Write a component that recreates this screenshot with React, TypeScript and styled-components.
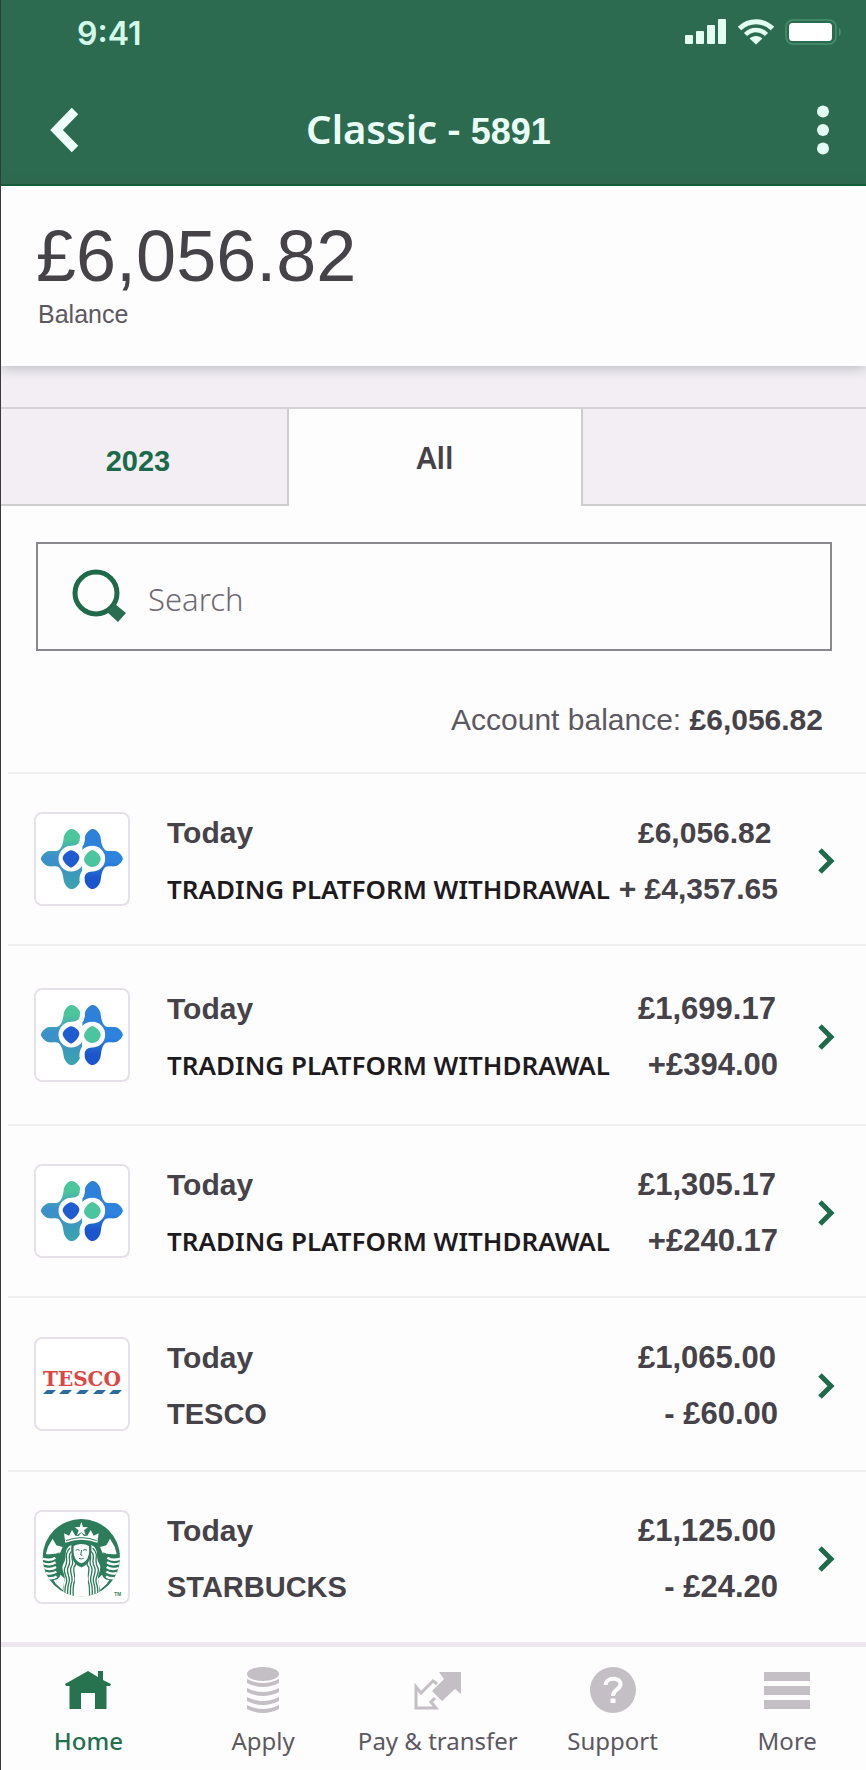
import React from "react";
import styled, { createGlobalStyle } from "styled-components";

const GlobalStyle = createGlobalStyle`
  *, *::before, *::after { box-sizing: border-box; }
  body { margin: 0; background: #fefdfe; }
  h1, p, ul { margin: 0; padding: 0; }
  ul { list-style: none; }
  button { font: inherit; border: 0; padding: 0; background: none; cursor: pointer; }
`;

const sans = `"Liberation Sans", Arial, sans-serif`;
const humanist = `"Noto Sans", "Open Sans", sans-serif`;

const Page = styled.div`
  min-height: 100vh;
  display: flex;
  flex-direction: column;
  border-left: 1px solid #3a383b;
  background: #fefdfe;
  color: #454248;
  font-family: ${sans};
  overflow-x: hidden;
`;

const Header = styled.header`
  background: #2d6b50;
  border-bottom: 2px solid #13603c;
  color: #eafff6;
`;

const StatusBar = styled.div`
  display: flex;
  align-items: center;
  justify-content: space-between;
  height: 68px;
  padding: 0 24px 0 76px;
`;

const Clock = styled.span`
  font: 600 32px/36px Inter, sans-serif;
  color: #d3fbea;
`;

const StatusIcons = styled.div`
  display: flex;
  align-items: center;
  gap: 10px;
  padding-bottom: 4px;
`;

const TitleBar = styled.div`
  display: grid;
  grid-template-columns: 1fr auto 1fr;
  align-items: center;
  height: 116px;
  padding: 8px 30px 0 20px;
`;

const IconButton = styled.button<{ $end?: boolean }>`
  display: flex;
  justify-content: center;
  width: ${(p) => (p.$end ? 26 : 86)}px;
  justify-self: ${(p) => (p.$end ? "end" : "start")};
  padding: 4px 0;
`;

const Title = styled.h1`
  font: 600 40px/52px ${humanist};
  white-space: nowrap;
`;

const AccountNumber = styled.span`
  font: 700 36px/52px ${sans};
`;

const Summary = styled.section`
  position: relative;
  height: 180px;
  padding: 30px 35px 0;
  background: #fefdfe;
  box-shadow: 0 2px 12px rgba(60, 64, 66, 0.3);
`;

const BigBalance = styled.p`
  font-size: 72px;
  line-height: 80px;
`;

const BalanceLabel = styled.p`
  padding: 4px 2px;
  font-size: 25px;
  line-height: 28px;
  color: #5c5860;
`;

const TabBand = styled.div`
  padding-top: 41px;
  background: #f2eef4;
`;

const Tabs = styled.div`
  display: grid;
  grid-template-columns: 288fr 292fr 285fr;
  height: 99px;
  border-top: 2px solid #d5d1d6;
`;

const Tab = styled.button<{ $active?: boolean; $side?: "left" | "right" }>`
  border-style: solid;
  border-color: #d0cdd1;
  border-width: 0;
  border-bottom-width: ${(p) => (p.$active ? 0 : 2)}px;
  border-right-width: ${(p) => (p.$side === "left" ? 2 : 0)}px;
  border-left-width: ${(p) => (p.$side === "right" ? 2 : 0)}px;
  padding: ${(p) => (p.$active ? 0 : "8px 12px 0 0")};
  background: ${(p) => (p.$active ? "#fefdfe" : "#f2eef4")};
  color: ${(p) => (p.$active ? "#454248" : "#1a6a4a")};
  font: ${(p) => (p.$active ? `600 30px/36px ${humanist}` : `700 29px/36px ${sans}`)};
`;

const SearchBox = styled.label`
  display: flex;
  align-items: center;
  gap: 20px;
  height: 109px;
  margin: 36px 34px 0 35px;
  padding: 0 34px;
  border: 2px solid #8b888d;
`;

const SearchInput = styled.input`
  flex: 1;
  min-width: 0;
  border: 0;
  padding: 4px 0 0;
  outline: 0;
  background: transparent;
  font: 300 31px/40px ${humanist};
  color: #454248;
  &::placeholder { color: #6d6971; opacity: 1; }
`;

const AccountBalance = styled.p`
  padding: 51px 43px 34px;
  font-size: 30px;
  line-height: 36px;
  text-align: right;
  color: #5c5860;
  strong { color: #454248; }
`;

const TransactionList = styled.ul`
  margin-left: 7px;
`;

const Row = styled.a<{ $height: number }>`
  display: grid;
  grid-template-columns: 96px 1fr 140px 57px;
  align-items: center;
  min-height: ${(p) => p.$height}px;
  padding: 3px 31px 0 26px;
  border-top: 2px solid #f1eef1;
  color: inherit;
  text-decoration: none;
`;

const Tile = styled.span`
  display: block;
  width: 96px;
  height: 94px;
  margin-bottom: 4px;
  border: 2px solid #e6e1e8;
  border-radius: 8px;
  background: #fff;
  svg { display: block; }
`;

const Details = styled.span`
  display: grid;
  gap: 20px;
  padding-left: 37px;
  white-space: nowrap;
`;

const Day = styled.span`
  font: 700 30px/36px ${sans};
`;

const Payee = styled.span<{ $strong?: boolean }>`
  font: ${(p) => (p.$strong ? `600 26px/36px ${humanist}` : `700 29px/36px ${sans}`)};
  color: ${(p) => (p.$strong ? "#1d1a20" : "inherit")};
`;

const Amounts = styled.span<{ $compact?: boolean }>`
  display: flex;
  flex-direction: column;
  align-items: flex-end;
  gap: 20px;
  font-weight: 700;
  font-size: ${(p) => (p.$compact ? 30 : 31)}px;
  line-height: 36px;
  white-space: nowrap;
`;

const RunningBalance = styled.span`
  width: 100%;
`;

const ChevronCell = styled.span`
  display: flex;
  justify-content: flex-end;
`;

const BottomNav = styled.nav`
  display: grid;
  grid-template-columns: repeat(5, 20.2%);
  height: 130px;
  overflow: hidden;
  border-top: 5px solid #ede8ee;
`;

const NavItem = styled.a<{ $active?: boolean }>`
  display: flex;
  flex-direction: column;
  align-items: center;
  gap: 12px;
  padding-top: 20px;
  color: ${(p) => (p.$active ? "#23704e" : "#5c5860")};
  font: ${(p) => (p.$active ? 500 : 400)} 24px/32px ${humanist};
  text-decoration: none;
  white-space: nowrap;
  svg { fill: ${(p) => (p.$active ? "#27724f" : "#c3bfc5")}; }
`;

const Signal = () => (
  <svg width="42" height="26" viewBox="0 0 42 26" fill="#e4fff4" aria-hidden="true">
    <rect x="0" y="16" width="8" height="9" rx="1" />
    <rect x="11" y="12" width="8" height="13" rx="1" />
    <rect x="22" y="6" width="8" height="19" rx="1" />
    <rect x="33" y="0" width="8" height="25" rx="1" />
  </svg>
);

const Wifi = () => (
  <svg width="38" height="26" viewBox="0 0 38 26" fill="none" stroke="#e4fff4" aria-hidden="true">
    <path d="M2.5 9.5C12 0.5 26 0.5 35.500 9.500" strokeWidth="5" />
    <path d="M8.500 15.500C14.500 9.500 23.500 9.500 29.500 15.500" strokeWidth="4.500" />
    <path d="M12.500 19.500C16 16 22 16 25.500 19.500L19 25.500Z" fill="#e4fff4" stroke="none" />
  </svg>
);

const Battery = () => (
  <svg width="57" height="26" viewBox="0 0 57 26" fill="none" aria-hidden="true">
    <rect x="1" y="1" width="50" height="24" rx="7" stroke="#46916f" strokeWidth="1.500" />
    <rect x="4" y="4" width="43" height="18" rx="3.500" fill="#fff" />
    <path d="M54 9c2.500 1 2.500 7 0 8z" fill="#46916f" />
  </svg>
);

const BackIcon = () => (
  <svg width="30" height="46" viewBox="0 0 30 46" fill="none" stroke="#effff9" strokeWidth="9" aria-hidden="true">
    <path d="M26 4L7.500 23L26 42" />
  </svg>
);

const DotsIcon = () => (
  <svg width="12" height="50" viewBox="0 0 12 50" fill="#e4fff4" aria-hidden="true">
    <circle cx="6" cy="6.500" r="6" />
    <circle cx="6" cy="25" r="6" />
    <circle cx="6" cy="43.500" r="6" />
  </svg>
);

const SearchIcon = () => (
  <svg width="56" height="56" viewBox="0 0 56 56" aria-hidden="true">
    <circle cx="24" cy="24" r="21" fill="none" stroke="#1f6a4b" strokeWidth="5" />
    <path d="M35 43L43 35L54 44L46 53Z" fill="#2a6e51" />
  </svg>
);

const Chevron = () => (
  <svg width="18" height="28" viewBox="0 0 18 28" fill="none" stroke="#1f6a4b" strokeWidth="5" aria-hidden="true">
    <path d="M3 3L14 14L3 25" />
  </svg>
);

const PlatformLogo = ({ id }: { id: string }) => (
  <svg width="92" height="90" viewBox="48 38 276 270" role="img" aria-label="Trading platform">
    <defs>
      <clipPath id={id}>
        <path d="M155 82C166 84 181 97 181 108L184 132H190L194 110C196 98 206 84 218 82C230 84 240 96 242 110C243 126 248 138 254 145C262 151 274 149 284 149C296 150 306 162 309 172C306 182 296 193 284 195C274 196 262 193 254 199C246 208 244 220 242 236C240 250 230 261 218 264C206 262 196 250 194 238L190 212H184L181 238C178 250 167 262 155 264C143 262 133 250 131 236C129 220 126 208 118 199C110 193 98 196 88 195C76 193 66 182 62 172C66 162 76 150 88 149C98 149 110 151 118 145C126 138 129 126 131 110C133 96 143 84 155 82Z" />
      </clipPath>
      <linearGradient id={`${id}g`} x1="0" y1="0" x2="0" y2="1">
        <stop offset="0.2" stopColor="#4cc49c" />
        <stop offset="0.45" stopColor="#3b8fcb" />
        <stop offset="0.6" stopColor="#3b93c4" />
        <stop offset="1" stopColor="#3aa5ad" />
      </linearGradient>
      <linearGradient id={`${id}b`} x1="0" y1="0" x2="0" y2="1">
        <stop offset="0" stopColor="#2f7fd6" />
        <stop offset="0.55" stopColor="#2b84e0" />
        <stop offset="0.8" stopColor="#1c56cc" />
      </linearGradient>
    </defs>
    <g clipPath={`url(#${id})`}>
      <rect x="60" y="80" width="127" height="186" fill={`url(#${id}g)`} />
      <rect x="187" y="80" width="123" height="186" fill={`url(#${id}b)`} />
    </g>
    <path
      d="M187 108C189 130 176 141 155 141A31 31 0 0 0 153 203C174 203 184 190 185 172C186 154 197 141 217 141A31 31 0 0 1 217 203C197 203 184 214 186 240"
      fill="#fff"
      stroke="#fff"
      strokeWidth="15"
    />
    <path d="M153 147C163 149 178 157 178 169C177 181 164 195 153 199C142 195 129 181 128 171C129 158 143 149 153 147Z" fill="#1f5cd2" />
    <path d="M217 146C228 149 242 162 242 173C241 187 228 197 217 197C206 197 193 187 192 175C193 162 206 149 217 146Z" fill="#4bc59d" />
  </svg>
);

const TescoLogo = () => (
  <svg width="92" height="90" viewBox="0 0 92 90" role="img" aria-label="Tesco">
    <text x="46" y="47" textAnchor="middle" fontFamily="DejaVu Serif, serif" fontWeight="700" fontSize="20" fill="#db4743">
      TESCO
    </text>
    {[7, 23, 40, 57, 73].map((x) => (
      <path key={x} d={`M${x} 55L${x + 4} 51H${x + 13}L${x + 9} 55Z`} fill="#2b6c9c" />
    ))}
  </svg>
);

const hair = [0, 11, 22, 33];

const SirenSide = () => (
  <>
    <path d="M77 196L84 172L98 148L109 168L128 173L120 192Z" fill="#fff" />
    <path d="M68 192Q98 206 118 190" fill="none" stroke="#2d7c5b" strokeWidth="3" />
    {[0, 1, 2, 3, 4].map((i) => (
      <path
        key={i}
        d={`M${62 + i * 5} ${206 + i * 15}Q${88 + i * 3} ${217 + i * 13} ${106 + i} ${205 + i * 14}`}
        fill="none"
        stroke="#fff"
        strokeWidth="7"
      />
    ))}
    <path d="M100 272Q116 272 122 256L134 268L128 302L108 284Z" fill="#fff" />
    <path d="M152 168C128 182 143 204 131 222C119 242 140 256 133 276Q128 292 131 330L184 330L184 168Z" fill="#fff" />
    {hair.map((dx, i) => (
      <path
        key={dx}
        d={`M${150 + i * 4} ${176 + i * 10}C${128 + dx} ${198 + i * 4} ${148 + dx * 0.8} ${210 + i * 4} ${136 + dx * 0.8} ${232}C${124 + dx} 252 ${148 + dx * 0.7} 262 ${138 + dx * 0.7} 284Q${132 + dx * 0.8} 300 ${137 + dx * 0.7} 330`}
        fill="none"
        stroke="#2d7c5b"
        strokeWidth="4"
      />
    ))}
  </>
);

const StarbucksLogo = () => (
  <svg width="92" height="90" viewBox="48 68 276 270" role="img" aria-label="Starbucks">
    <defs>
      <clipPath id="siren">
        <circle cx="184" cy="205" r="116" />
      </clipPath>
    </defs>
    <g clipPath="url(#siren)">
      <rect x="60" y="80" width="250" height="250" fill="#2d7c5b" />
      <SirenSide />
      <g transform="matrix(-1 0 0 1 368 0)">
        <SirenSide />
      </g>
      <path d="M172 242Q184 230 196 242Q208 262 202 284L206 330L162 330L166 284Q160 262 172 242Z" fill="#fff" />
      <path d="M154 168Q184 152 214 168Q218 224 184 234Q150 224 154 168Z" fill="#2d7c5b" />
      <path d="M161 170Q184 158 207 170Q211 214 184 222Q157 214 161 170Z" fill="#fff" />
      <path d="M167 183Q173 178 179 183M189 183Q195 178 201 183M185 182L182 197L187 198M177 207Q184 211 191 207" fill="none" stroke="#2d7c5b" strokeWidth="3" />
      <path d="M136 160L132 132L147 139L156 122L166 139L176 140L184 130L192 140L202 139L212 122L221 139L236 132L232 160Q184 142 136 160Z" fill="#fff" />
      <path d="M138 154Q184 136 230 154" fill="none" stroke="#2d7c5b" strokeWidth="3" />
      <path d="M184 98L189 113L204 114L192 123L197 138L184 129L171 138L176 123L164 114L179 113Z" fill="#fff" />
    </g>
    <text x="283" y="320" fontFamily="Liberation Sans, sans-serif" fontSize="14" fontWeight="700" fill="#2d7c5b">
      TM
    </text>
  </svg>
);

const HomeIcon = () => (
  <svg width="46" height="46" viewBox="0 0 46 46" aria-hidden="true">
    <path d="M0 17L23 4L33 10V4H38V13L46 17L45 19H41.500V42H30V26H16V42H4.500V19H1Z" />
  </svg>
);

const CoinsIcon = () => (
  <svg width="46" height="46" viewBox="0 0 46 46" aria-hidden="true">
    <ellipse cx="23" cy="7" rx="16" ry="7" />
    {[12, 21, 30, 38].map((y) => (
      <path key={y} d={`M7 ${y}Q23 ${y + 8} 39 ${y}V${y + 4}Q23 ${y + 12} 7 ${y + 4}Z`} />
    ))}
  </svg>
);

const TransferIcon = () => (
  <svg width="48" height="46" viewBox="0 0 48 46" aria-hidden="true">
    <path d="M25 5H47V27L41 22L28 34L18 24L30 12Z" />
    <path d="M23 17L19 14L7 26L2 20V41H22L17 35L21 31" style={{ fill: "none" }} stroke="#c3bfc5" strokeWidth="3" />
  </svg>
);

const HelpIcon = () => (
  <svg width="46" height="46" viewBox="0 0 46 46" aria-hidden="true">
    <circle cx="23" cy="23" r="23" />
    <path d="M15.500 18C16 9.500 31 10 30.500 17.500C30 23.500 23 22 23 29" style={{ fill: "none" }} stroke="#fefdfe" strokeWidth="4" />
    <path d="M20.500 31.500H25.500V36H20.500Z" style={{ fill: "#fefdfe" }} />
  </svg>
);

const MoreIcon = () => (
  <svg width="46" height="46" viewBox="0 0 46 46" aria-hidden="true">
    <path d="M0 5H46V14H0ZM0 19H46V28H0ZM0 33H46V42H0Z" />
  </svg>
);

const withdrawal = "TRADING PLATFORM WITHDRAWAL";

const transactions = [
  { payee: withdrawal, balance: "£6,056.82", change: "+ £4,357.65", logo: <PlatformLogo id="tp1" />, height: 172, compact: true },
  { payee: withdrawal, balance: "£1,699.17", change: "+£394.00", logo: <PlatformLogo id="tp2" />, height: 180 },
  { payee: withdrawal, balance: "£1,305.17", change: "+£240.17", logo: <PlatformLogo id="tp3" />, height: 172 },
  { payee: "TESCO", balance: "£1,065.00", change: "- £60.00", logo: <TescoLogo />, height: 174 },
  { payee: "STARBUCKS", balance: "£1,125.00", change: "- £24.20", logo: <StarbucksLogo />, height: 172 },
];

const navItems = [
  { label: "Home", icon: <HomeIcon />, active: true },
  { label: "Apply", icon: <CoinsIcon /> },
  { label: "Pay & transfer", icon: <TransferIcon /> },
  { label: "Support", icon: <HelpIcon /> },
  { label: "More", icon: <MoreIcon /> },
];

export default function App() {
  return (
    <Page>
      <GlobalStyle />
      <Header>
        <StatusBar>
          <Clock>9:41</Clock>
          <StatusIcons>
            <Signal />
            <Wifi />
            <Battery />
          </StatusIcons>
        </StatusBar>
        <TitleBar>
          <IconButton aria-label="Back">
            <BackIcon />
          </IconButton>
          <Title>
            Classic - <AccountNumber>5891</AccountNumber>
          </Title>
          <IconButton $end aria-label="Options">
            <DotsIcon />
          </IconButton>
        </TitleBar>
      </Header>
      <main>
        <Summary>
          <BigBalance>£6,056.82</BigBalance>
          <BalanceLabel>Balance</BalanceLabel>
        </Summary>
        <TabBand>
          <Tabs role="tablist">
            <Tab role="tab" $side="left">2023</Tab>
            <Tab role="tab" $active aria-selected>All</Tab>
            <Tab role="tab" $side="right" aria-label="Later" />
          </Tabs>
        </TabBand>
        <SearchBox>
          <SearchIcon />
          <SearchInput type="text" placeholder="Search" aria-label="Search" />
        </SearchBox>
        <AccountBalance>
          Account balance: <strong>£6,056.82</strong>
        </AccountBalance>
        <TransactionList>
          {transactions.map((t) => (
            <li key={t.balance}>
              <Row href="#" $height={t.height}>
                <Tile>{t.logo}</Tile>
                <Details>
                  <Day>Today</Day>
                  <Payee $strong={t.payee === withdrawal}>{t.payee}</Payee>
                </Details>
                <Amounts $compact={t.compact}>
                  <RunningBalance>{t.balance}</RunningBalance>
                  <span>{t.change}</span>
                </Amounts>
                <ChevronCell>
                  <Chevron />
                </ChevronCell>
              </Row>
            </li>
          ))}
        </TransactionList>
      </main>
      <BottomNav aria-label="Main">
        {navItems.map((n) => (
          <NavItem key={n.label} href="#" $active={n.active}>
            {n.icon}
            {n.label}
          </NavItem>
        ))}
      </BottomNav>
    </Page>
  );
}
